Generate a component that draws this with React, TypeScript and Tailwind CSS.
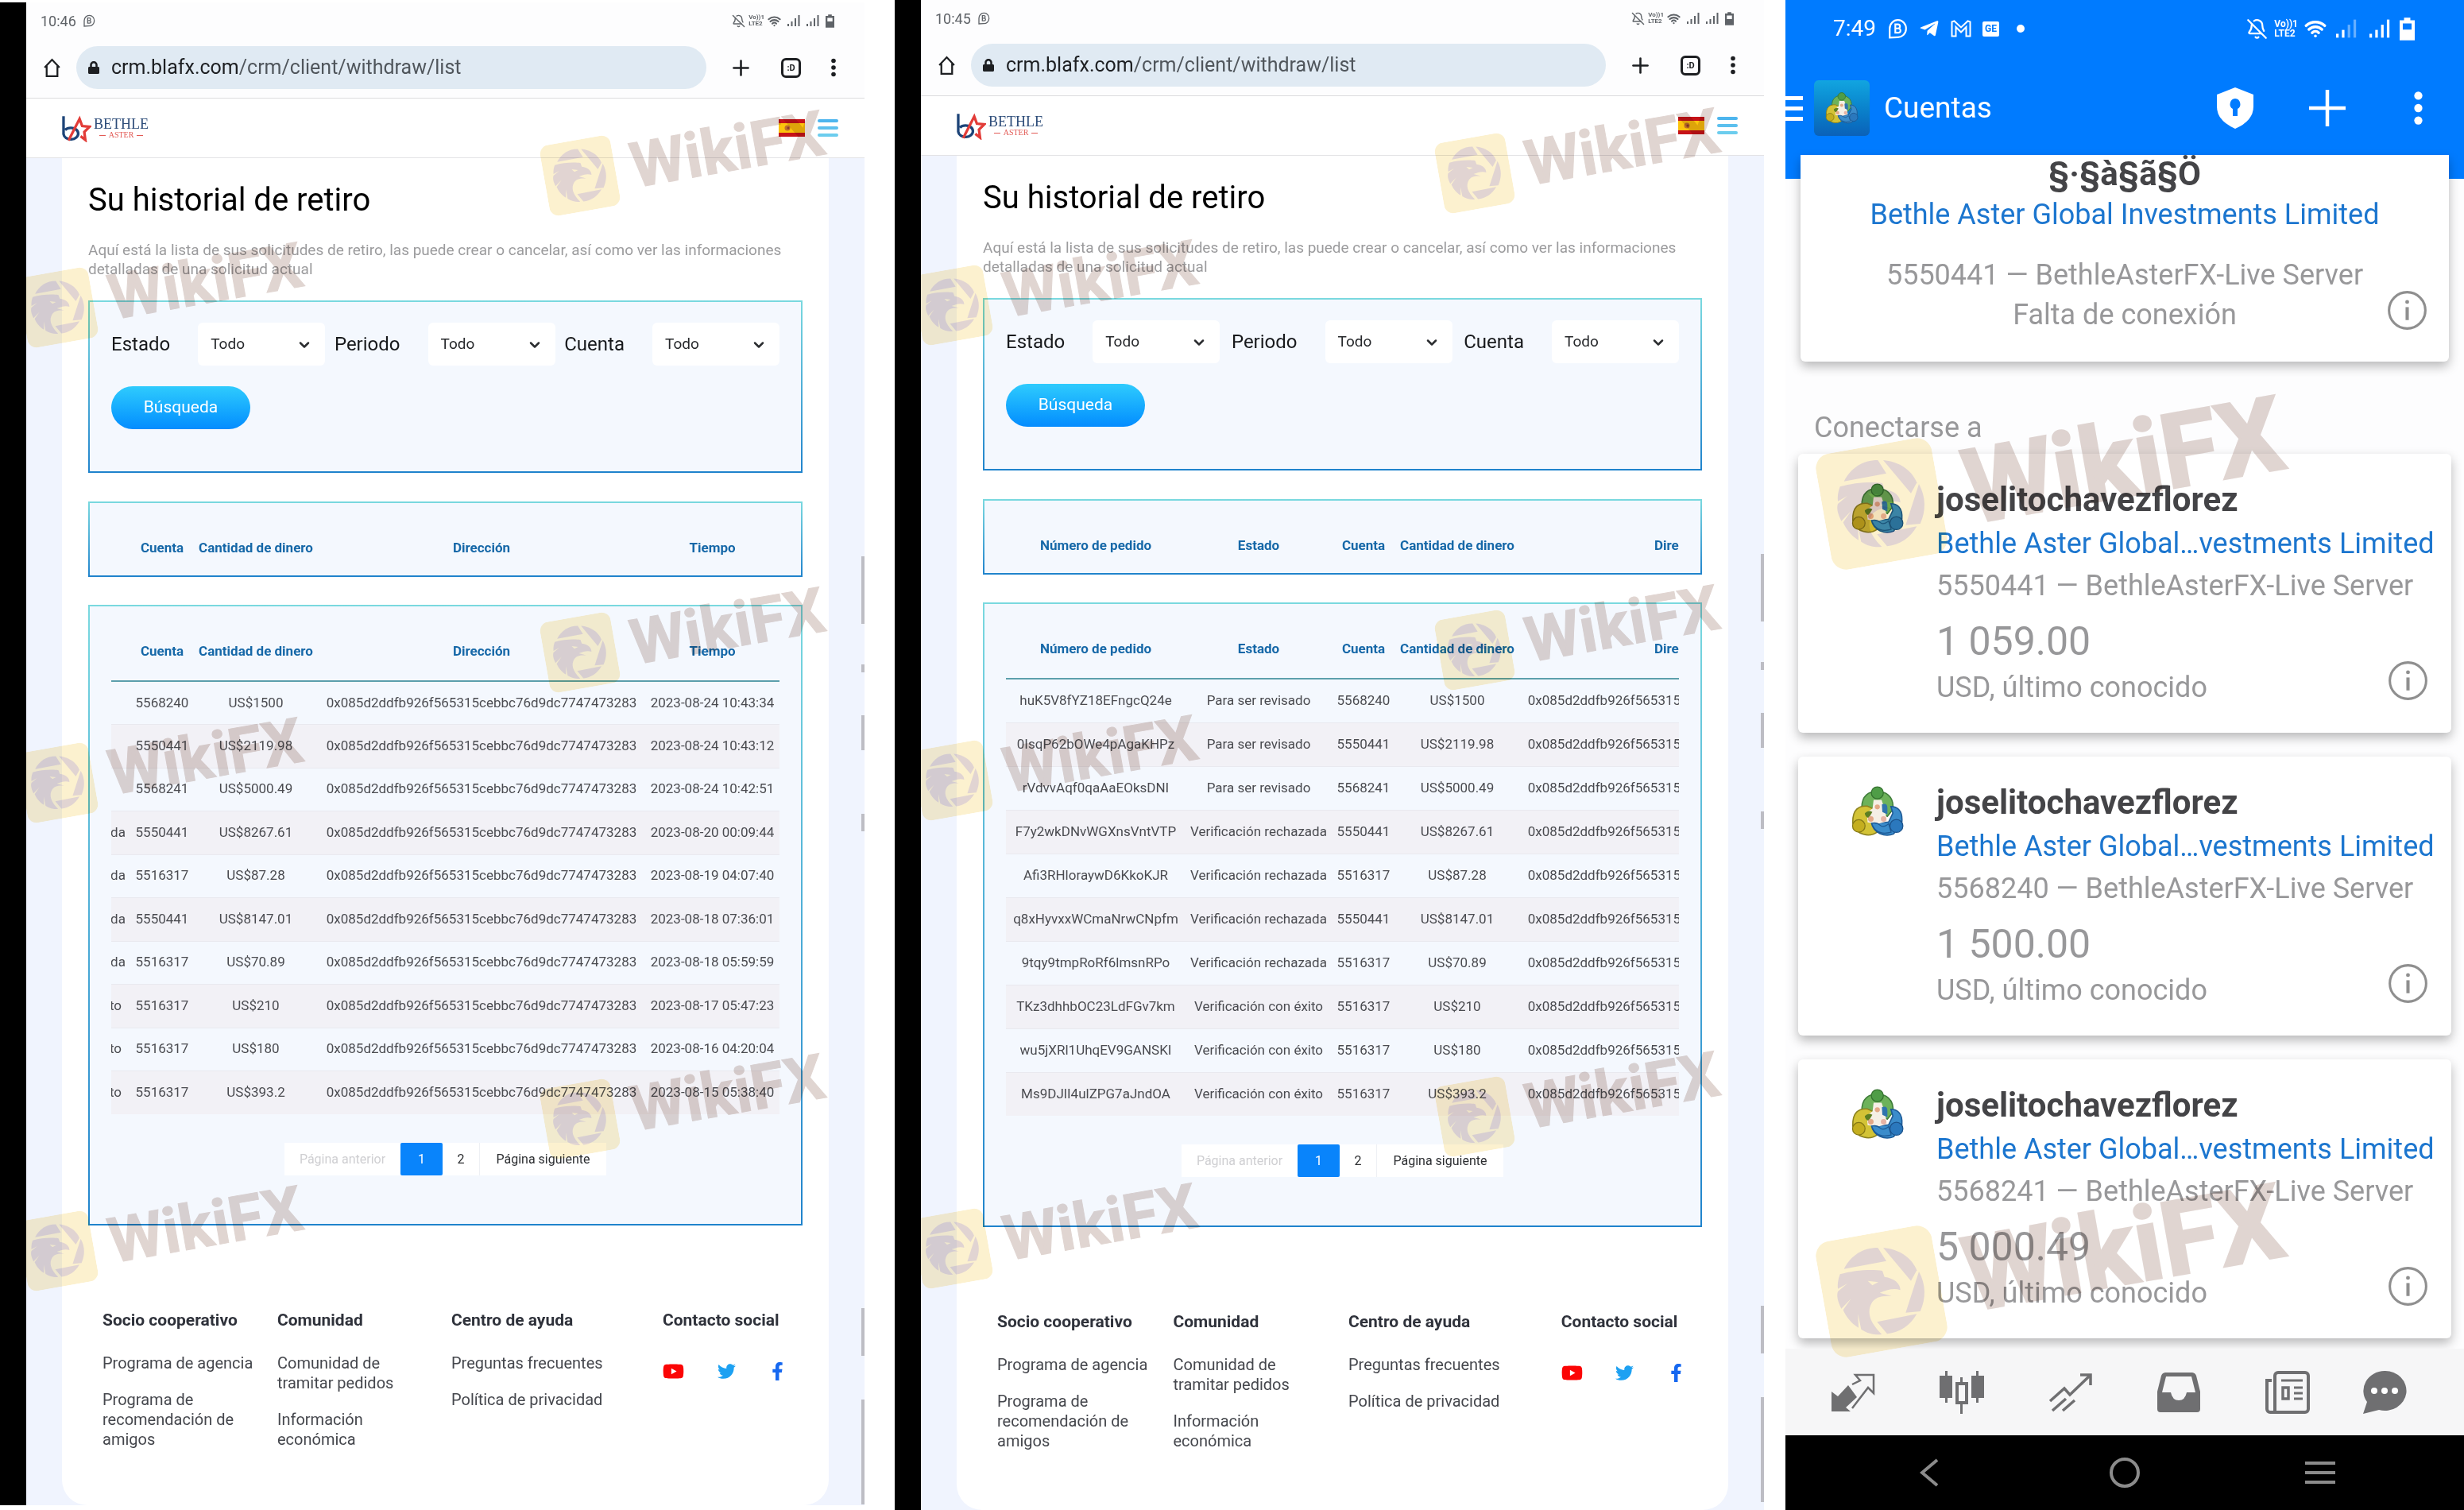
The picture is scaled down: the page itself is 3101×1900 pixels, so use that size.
import React, { ReactNode } from "react";
import { BellOff, ChevronDown, Plus, Wifi } from "lucide-react";
import { FaFacebookF, FaLock, FaTelegramPlane, FaTwitter, FaYoutube } from "react-icons/fa";

const ADDRESS = "0x085d2ddfb926f565315cebbc76d9dc7747473283";

const HEADERS = ["Número de pedido", "Estado", "Cuenta", "Cantidad de dinero", "Dirección", "Tiempo"];

const ROWS = [
  ["huK5V8fYZ18EFngcQ24e", "Para ser revisado", "5568240", "US$1500", "2023-08-24 10:43:34"],
  ["0IsqP62bOWe4pAgaKHPz", "Para ser revisado", "5550441", "US$2119.98", "2023-08-24 10:43:12"],
  ["rVdvvAqf0qaAaEOksDNI", "Para ser revisado", "5568241", "US$5000.49", "2023-08-24 10:42:51"],
  ["F7y2wkDNvWGXnsVntVTP", "Verificación rechazada", "5550441", "US$8267.61", "2023-08-20 00:09:44"],
  ["Afi3RHloraywD6KkoKJR", "Verificación rechazada", "5516317", "US$87.28", "2023-08-19 04:07:40"],
  ["q8xHyvxxWCmaNrwCNpfm", "Verificación rechazada", "5550441", "US$8147.01", "2023-08-18 07:36:01"],
  ["9tqy9tmpRoRf6lmsnRPo", "Verificación rechazada", "5516317", "US$70.89", "2023-08-18 05:59:59"],
  ["TKz3dhhbOC23LdFGv7km", "Verificación con éxito", "5516317", "US$210", "2023-08-17 05:47:23"],
  ["wu5jXRl1UhqEV9GANSKI", "Verificación con éxito", "5516317", "US$180", "2023-08-16 04:20:04"],
  ["Ms9DJlI4ulZPG7aJndOA", "Verificación con éxito", "5516317", "US$393.2", "2023-08-15 05:38:40"],
];

const FOOTER = [
  { title: "Socio cooperativo", links: ["Programa de agencia", "Programa de recomendación de amigos"] },
  { title: "Comunidad", links: ["Comunidad de tramitar pedidos", "Información económica"] },
  { title: "Centro de ayuda", links: ["Preguntas frecuentes", "Política de privacidad"] },
];

const ACCOUNTS = [
  { id: "5550441", balance: "1 059.00" },
  { id: "5568240", balance: "1 500.00" },
  { id: "5568241", balance: "5 000.49" },
];

function BusinessIcon({ className }: { className: string }) {
  return (
    <svg viewBox="0 0 24 24" className={className} fill="none" stroke="currentColor" strokeWidth="2">
      <path d="M3 22.500V12a9.500 10 0 1 1 9 10Z" />
      <path d="M9.500 7h3a2.200 2.200 0 0 1 0 4.800h-3Zm0 4.800h3.500a2.400 2.400 0 0 1 0 5H9.500Z" />
    </svg>
  );
}

function Signal({ className, dim = false }: { className: string; dim?: boolean }) {
  return (
    <svg viewBox="0 0 16 14" className={className} fill="currentColor">
      <rect x="0" y="11" width="2" height="3" />
      <rect x="4.500" y="8" width="2" height="6" />
      <rect x="9" y="4" width="2" height="10" opacity={dim ? 0.4 : 1} />
      <rect x="13.500" y="0" width="2" height="14" opacity={dim ? 0.4 : 1} />
    </svg>
  );
}

function Battery({ className }: { className: string }) {
  return (
    <svg viewBox="0 0 12 18" className={className}>
      <path d="M3.500 0h5v2H12v16H0V2h3.500Z M2.500 4.500v5h7v-5Z" fill="currentColor" fillRule="evenodd" />
    </svg>
  );
}

function Dots({ className }: { className: string }) {
  return (
    <svg viewBox="0 0 6 24" className={className} fill="currentColor">
      <circle cx="3" cy="3.500" r="2.800" />
      <circle cx="3" cy="12" r="2.800" />
      <circle cx="3" cy="20.500" r="2.800" />
    </svg>
  );
}

function Watermark({ className, large = false }: { className: string; large?: boolean }) {
  return (
    <div
      aria-hidden="true"
      className={`pointer-events-none absolute z-10 flex -rotate-10 items-center mix-blend-multiply ${
        large ? "origin-[74px_74px] gap-8" : "origin-[45px_45px] gap-5"
      } ${className}`}
    >
      <svg viewBox="0 0 100 100" className={large ? "size-[148px]" : "size-[90px]"}>
        <rect width="100" height="100" rx="13" fill="#fcf1cf" />
        <g transform="rotate(10 50 50) translate(50 50) scale(.2252) translate(-297 -285)" fill="#e1d4d2">
          <path d="M155 200C180 150 225 120 283 120L315 170Z" />
          <path d="M303 120C360 125 410 155 430 205L408 245Z" />
          <path d="M438 210C465 260 465 310 443 360L388 365Z" />
          <path d="M430 370C405 415 365 440 318 445L280 400Z" />
          <path d="M140 220C190 205 260 200 300 207L308 230C345 235 368 255 368 280C345 272 320 278 290 290L335 302C310 302 280 300 262 325C240 360 250 400 298 447C275 450 245 445 220 428L208 370L210 422C180 405 160 375 152 355L182 312L145 350C130 320 127 300 132 285L168 255L132 275C130 250 135 235 140 220Z" />
          <path d="M245 245L285 250L262 262Z" fill="#fcf1cf" />
        </g>
      </svg>
      <span
        className={`font-bold whitespace-nowrap text-[#e0d5d1] ${
          large ? "text-[130px] leading-[148px] [-webkit-text-stroke:3px_#e0d5d1]" : "text-[79px] leading-[90px] [-webkit-text-stroke:1px_#e0d5d1]"
        }`}
      >
        WikiFX
      </span>
    </div>
  );
}

function BrowserBar({ time }: { time: string }) {
  return (
    <header className="border-b border-[#dcdcde] bg-[#fdfdfe]">
      <div className="flex h-[46px] items-center justify-between pr-[38px] pl-[18px] text-[#5f6368]">
        <div className="flex items-center gap-2">
          <span className="text-[18px]">{time}</span>
          <BusinessIcon className="size-4" />
        </div>
        <div className="flex items-center gap-1">
          <BellOff className="size-[17px]" />
          <span className="text-[8px] leading-[8px] font-bold">
            Vo))1
            <br />
            LTE2
          </span>
          <Wifi className="size-[17px]" strokeWidth={3} />
          <Signal className="ml-1 h-[14px] w-4" />
          <Signal className="ml-1 h-[14px] w-4" />
          <Battery className="ml-1 h-[17px] w-[11px]" />
        </div>
      </div>
      <div className="flex h-[74px] items-center pr-[36px] pb-[2px] pl-5 text-[#1d1f22]">
        <button type="button" aria-label="Inicio">
          <svg viewBox="0 0 24 24" className="h-[25px] w-[25px]" fill="none" stroke="currentColor" strokeWidth="2.200">
            <path d="M3 11.500 12 2l9 9.500M5.500 9.500V22h13V9.500" />
          </svg>
        </button>
        <div className="ml-[18px] flex h-[54px] flex-1 items-center gap-[14px] rounded-full bg-[#e0eaf3] pl-[14px]">
          <FaLock className="size-4" />
          <span className="text-[25px]">
            crm.blafx.com<span className="text-[#50565c]">/crm/client/withdraw/list</span>
          </span>
        </div>
        <button type="button" aria-label="Nueva pestaña" className="ml-[28px]">
          <Plus className="size-[31px]" />
        </button>
        <button
          type="button"
          aria-label="Pestañas"
          className="ml-[35px] size-[25px] rounded-md border-[3px] border-current text-[11px] leading-none font-bold"
        >
          :D
        </button>
        <button type="button" aria-label="Más opciones" className="ml-[38px]">
          <Dots className="h-6 w-[6px]" />
        </button>
      </div>
    </header>
  );
}

function SiteHeader() {
  return (
    <div className="flex h-[75px] items-center justify-between border-b border-[#e3e3e6] bg-white pr-[33px] pl-[43px]">
      <a href="#" className="flex items-center gap-[3px]">
        <svg viewBox="45 38 118 104" className="h-[35px] w-[39px]" fill="none" strokeWidth="10">
          <path d="M57 44V112a28 22 0 1 0 28-24q-14 0-22 8" stroke="#1d4478" />
          <path d="M76 136 118 54l10 27 28 3-20 20 4 30-18-14" stroke="#e23c38" />
        </svg>
        <span className="flex flex-col items-center font-['Liberation_Serif',serif]">
          <span className="text-[18px] leading-[18px] text-[#2b4b78]">BETHLE</span>
          <span className="flex items-center gap-1 text-[10px] leading-[10px] text-[#e25a55]">
            <span className="h-px w-2 bg-current" />
            ASTER
            <span className="h-px w-2 bg-current" />
          </span>
        </span>
      </a>
      <div className="flex items-center gap-4">
        <svg viewBox="0 0 33 22" className="h-[22px] w-[33px]">
          <rect width="33" height="22" fill="#c61318" />
          <rect y="5" width="33" height="12" fill="#fcc40c" />
          <circle cx="11" cy="11" r="3.500" fill="#c0702a" />
          <circle cx="12" cy="11" r="1.500" fill="#8c3a2c" />
        </svg>
        <button type="button" aria-label="Menú" className="flex w-[26px] flex-col gap-[5px]">
          <span className="h-1 rounded-sm bg-[#4db5ee]" />
          <span className="h-1 rounded-sm bg-[#5cc0ee]" />
          <span className="h-1 rounded-sm bg-[#6ccdee]" />
        </button>
      </div>
    </div>
  );
}

function Frame({ children, className }: { children: ReactNode; className: string }) {
  return (
    <div className="bg-linear-to-b from-[#7ad9df] to-[#1f83cc] p-[2px]">
      <div className={`bg-[#f4f8fe] px-[27px] ${className}`}>{children}</div>
    </div>
  );
}

function Filter({ id, label }: { id: string; label: string }) {
  return (
    <div className="flex items-center gap-[35px]">
      <label htmlFor={id} className="text-[24px] text-[#17191c]">
        {label}
      </label>
      <div className="relative">
        <select id={id} className="h-[54px] w-[160px] appearance-none rounded-md bg-white pl-4 text-[19px] text-[#26282b]">
          <option>Todo</option>
        </select>
        <ChevronDown className="pointer-events-none absolute top-[18px] right-4 size-5 text-[#2b2d30]" strokeWidth={3} />
      </div>
    </div>
  );
}

function WithdrawTable({ rows, scrolled, rowClass }: { rows: string[][]; scrolled: boolean; rowClass: string }) {
  return (
    <div className={`flex overflow-hidden ${scrolled ? "justify-end" : "justify-start"}`}>
      <table className="w-[1227px] shrink-0 table-fixed border-collapse text-center text-[17px] whitespace-nowrap text-[#4a4b50]">
        <colgroup>
          <col className="w-[226px]" />
          <col className="w-[184px]" />
          <col className="w-[80px]" />
          <col className="w-[156px]" />
          <col className="w-[412px]" />
          <col className="w-[169px]" />
        </colgroup>
        <thead>
          <tr className="h-[74px] border-b-2 border-[#5c9fac] text-[#1668a8]">
            {HEADERS.map((header) => (
              <th key={header} className="font-bold">
                {header}
              </th>
            ))}
          </tr>
        </thead>
        <tbody>
          {rows.map(([order, status, account, amount, time]) => (
            <tr key={order} className={`border-b border-[#e9e9ef] last:border-0 even:bg-[#f2f1f6] ${rowClass}`}>
              <td>{order}</td>
              <td>{status}</td>
              <td>{account}</td>
              <td>{amount}</td>
              <td>{ADDRESS}</td>
              <td>{time}</td>
            </tr>
          ))}
        </tbody>
      </table>
    </div>
  );
}

function Pagination() {
  return (
    <nav className="mt-[36px] flex h-[41px] justify-center text-[16px] text-[#2c2e31]">
      <button type="button" disabled className="w-[146px] bg-white text-[#cfcfd2]">
        Página anterior
      </button>
      <button type="button" className="w-[53px] rounded-xs bg-[#0984fb] text-white">
        1
      </button>
      <button type="button" className="w-[47px] border-r border-[#eef0f4] bg-white">
        2
      </button>
      <button type="button" className="w-[159px] bg-white">
        Página siguiente
      </button>
    </nav>
  );
}

function PageFooter() {
  return (
    <footer className="mt-[107px] grid grid-cols-[220fr_219fr_266fr_176fr] pb-16 pl-[18px] text-[20px] leading-[25px] text-[#45474d]">
      {FOOTER.map((group) => (
        <div key={group.title}>
          <h2 className="mb-[29px] text-[21px] font-bold whitespace-nowrap text-[#2f323b]">{group.title}</h2>
          <ul className="flex flex-col gap-[21px] pr-6">
            {group.links.map((link) => (
              <li key={link}>
                <a href="#">{link}</a>
              </li>
            ))}
          </ul>
        </div>
      ))}
      <div>
        <h2 className="mb-[38px] text-[21px] font-bold whitespace-nowrap text-[#2f323b]">Contacto social</h2>
        <div className="flex w-[156px] items-center justify-between">
          <a href="#" aria-label="YouTube">
            <FaYoutube className="size-[27px] text-[#fb0505]" />
          </a>
          <a href="#" aria-label="Twitter">
            <FaTwitter className="size-[23px] text-[#1da1f2]" />
          </a>
          <a href="#" aria-label="Facebook">
            <FaFacebookF className="size-[23px] text-[#1668f0]" />
          </a>
        </div>
      </div>
    </footer>
  );
}

type WithdrawScreenProps = {
  id: string;
  time: string;
  scrolled: boolean;
  className: string;
  rowClass: string;
};

function WithdrawScreen({ id, time, scrolled, className, rowClass }: WithdrawScreenProps) {
  return (
    <section className={`relative flex min-w-0 flex-col border-black bg-[#fdfdfe] ${className}`}>
      <BrowserBar time={time} />
      <SiteHeader />
      <main className="flex flex-1 flex-col bg-[#f0f4fe] px-[45px]">
        <div className="flex-1 rounded-b-[32px] bg-white px-[33px] pt-[32px]">
          <h1 className="text-[40px] leading-[42px] text-black">Su historial de retiro</h1>
          <p className="mt-[30px] mb-[27px] text-[19px] leading-[24px] text-[#9b9b9d]">
            Aquí está la lista de sus solicitudes de retiro, las puede crear o cancelar, así como ver las informaciones
            detalladas de una solicitud actual
          </p>

          <Frame className="h-[213px] pt-[26px]">
            <div className="flex justify-between">
              <Filter id={`${id}-estado`} label="Estado" />
              <Filter id={`${id}-periodo`} label="Periodo" />
              <Filter id={`${id}-cuenta`} label="Cuenta" />
            </div>
            <button
              type="button"
              className="mt-[26px] h-[54px] w-[175px] rounded-full bg-linear-to-b from-[#2fcbfd] to-[#068cfe] text-[21px] text-white"
            >
              Búsqueda
            </button>
          </Frame>

          <div className="mt-[36px] mb-[35px]">
            <Frame className="h-[91px] overflow-hidden pt-5">
              <WithdrawTable rows={[]} scrolled={scrolled} rowClass={rowClass} />
            </Frame>
          </div>

          <Frame className="pt-5 pb-[61px]">
            <WithdrawTable rows={ROWS} scrolled={scrolled} rowClass={rowClass} />
            <Pagination />
          </Frame>

          <PageFooter />
        </div>
      </main>

      {/* scroll position ticks on the page edge */}
      <div className="absolute top-[697px] right-0 h-[85px] w-1 bg-[#bdbdc4]" />
      <div className="absolute top-[833px] right-0 h-[10px] w-1 bg-[#bdbdc4]" />
      <div className="absolute top-[897px] right-0 h-[44px] w-1 bg-[#bdbdc4]" />
      <div className="absolute top-[1021px] right-0 h-[22px] w-1 bg-[#bdbdc4]" />
      <div className="absolute top-[1643px] right-0 h-[60px] w-1 bg-[#bdbdc4]" />
      <div className="absolute top-[1758px] right-0 h-[132px] w-1 bg-[#bdbdc4]" />

      <Watermark className="top-[173px] left-[652px]" />
      <Watermark className="top-[339px] left-[-5px]" />
      <Watermark className="top-[773px] left-[652px]" />
      <Watermark className="top-[937px] left-[-5px]" />
      <Watermark className="top-[1360px] left-[652px]" />
      <Watermark className="top-[1526px] left-[-5px]" />
    </section>
  );
}

function MetaTraderIcon({ className }: { className: string }) {
  return (
    <svg viewBox="50 52 222 212" className={className}>
      <path d="M98 150C95 90 130 78 160 78S228 95 222 150L200 178 150 150 120 160Z" fill="#6db25a" stroke="#3f7d3a" strokeWidth="5" />
      <path d="M62 205C60 150 85 135 120 137L150 150 160 240C130 262 75 255 62 205Z" fill="#d3c336" stroke="#8c8220" strokeWidth="5" />
      <path d="M258 200C262 150 235 138 214 138L222 165 205 200 160 205 137 205C145 245 190 262 225 248Z" fill="#3b8ccb" stroke="#1d5a96" strokeWidth="5" />
      <path d="M145 112h32l14 44 8 42-38 10-40-6-2-40 22-16Z" fill="#f5efe6" />
      <path d="M178 130q22-8 22 14v26l-20-10Z" fill="#2f74ad" />
      <path d="M110 165q14-14 30-5l-14 24q-16-4-16-19Z" fill="#5c7f22" />
      <path d="M137 205q22-4 34 8t34-6l10 34q-60 16-78-36Z" fill="#3b8ccb" stroke="#1d5a96" strokeWidth="4" />
      <circle cx="160" cy="140" r="10" fill="#e3a887" />
      <circle cx="134" cy="188" r="11" fill="#e3a887" />
      <circle cx="185" cy="188" r="11" fill="#e6b3a5" />
      <circle cx="160" cy="84" r="24" fill="#4f9d47" stroke="#35722f" strokeWidth="4" />
      <circle cx="86" cy="216" r="25" fill="#c4ae1f" stroke="#857815" strokeWidth="4" />
      <circle cx="236" cy="216" r="26" fill="#2b78bd" stroke="#1b528b" strokeWidth="4" />
    </svg>
  );
}

function InfoButton({ className }: { className: string }) {
  return (
    <button type="button" aria-label="Información" className={`text-[#8f8f8f] ${className}`}>
      <svg viewBox="0 0 24 24" className="size-[49px]" fill="none" stroke="currentColor" strokeWidth="1.500">
        <circle cx="12" cy="12" r="11.200" />
        <path d="M12 10v8" strokeWidth="2" />
        <circle cx="12" cy="6.800" r="1.200" fill="currentColor" stroke="none" />
      </svg>
    </button>
  );
}

function TabBar() {
  return (
    <nav className="mt-[13px] grid h-[109px] grid-cols-[137fr_137fr_137fr_137fr_122fr_56fr] items-center justify-items-start bg-[#f6f6f7] pr-[72px] pl-[57px] text-[#6f6f71]">
      <button type="button" aria-label="Cotizaciones">
        <svg viewBox="0 0 56 50" className="h-[50px] w-14">
          <path d="M1 49V24l8 6 13-14 11 15-14 13 6 5Z" fill="currentColor" />
          <path d="M27 15 37 10 31 3H54V26L47 19 27 45" fill="none" stroke="currentColor" strokeWidth="2.500" />
        </svg>
      </button>
      <button type="button" aria-label="Gráfico">
        <svg viewBox="0 0 56 54" className="h-[54px] w-14" fill="currentColor">
          <path d="M7 0h3v6h6v28h-6v6H7v-6H0V6h7ZM46 0h3v6h7v28h-7v6h-3v-6h-6V6h6Z" />
          <path d="M26 8h3v6h7v28h-7v12h-3V42h-6V14h6ZM24 18v20h8V18Z" fillRule="evenodd" />
        </svg>
      </button>
      <button type="button" aria-label="Operaciones">
        <svg viewBox="0 0 56 50" className="h-[50px] w-14" fill="none" stroke="currentColor" strokeWidth="3.500">
          <path d="M2 36 20 20l7 8L52 4M40 3h13v13M5 48 22 33M18 48 33 35" />
        </svg>
      </button>
      <button type="button" aria-label="Historial">
        <svg viewBox="0 0 56 50" className="h-[50px] w-14">
          <path
            d="M11 0h34a6 6 0 0 1 5 4l5 20v22a4 4 0 0 1-4 4H5a4 4 0 0 1-4-4V24L6 4a6 6 0 0 1 5-4Zm1 5L7 25h11q2 10 10 10t10-10h11L44 5Z"
            fill="currentColor"
            fillRule="evenodd"
          />
        </svg>
      </button>
      <button type="button" aria-label="Noticias">
        <svg viewBox="0 0 56 54" className="h-[54px] w-14" fill="none" stroke="currentColor" strokeWidth="4">
          <path d="M12 52V6a4 4 0 0 1 4-4h34a4 4 0 0 1 4 4v42a4 4 0 0 1-4 4H6a4 4 0 0 1-4-4V12h6" />
          <path d="M20 12h27M36 21h11M36 28h11M36 35h11" strokeWidth="3" />
          <path d="M22 21h7v14h-7Z" strokeWidth="3.500" />
        </svg>
      </button>
      <button type="button" aria-label="Mensajes">
        <svg viewBox="0 0 56 54" className="h-[54px] w-14">
          <path d="M28 0a27 25 0 1 1-7 49L1 54l5-15A27 25 0 0 1 28 0Z" fill="currentColor" />
          <g fill="#fff">
            <circle cx="15" cy="25" r="4" />
            <circle cx="28" cy="25" r="4" />
            <circle cx="41" cy="25" r="4" />
          </g>
        </svg>
      </button>
    </nav>
  );
}

function AccountCard({ id, balance }: { id: string; balance: string }) {
  return (
    <article className="flex gap-[39px] rounded-md bg-white pt-[30px] pr-[30px] pb-[29px] pl-[65px] shadow-[0_6px_14px_rgba(0,0,0,0.28)]">
      <MetaTraderIcon className="mt-[5px] h-[68px] w-[70px] shrink-0" />
      <div className="min-w-0 flex-1 whitespace-nowrap">
        <h3 className="text-[42px] leading-[56px] font-bold text-[#444447]">joselitochavezflorez</h3>
        <a href="#" className="block text-[36px] leading-[54px] text-[#1c76cf]">
          Bethle Aster Global…vestments Limited
        </a>
        <p className="text-[36px] leading-[52px] text-[#98989a]">{id} — BethleAsterFX-Live Server</p>
        <div className="mt-[14px] flex items-end justify-between">
          <div className="text-[#98989a]">
            <p className="text-[50px] leading-[60px]">{balance}</p>
            <p className="text-[36px] leading-[56px]">USD, último conocido</p>
          </div>
          <InfoButton className="mb-[12px]" />
        </div>
      </div>
    </article>
  );
}

function AccountsScreen() {
  return (
    <section className="relative flex min-w-0 flex-col bg-[#fdfdfe]">
      <header className="h-[225px] bg-[#007bff] text-white">
        <div className="flex h-[72px] items-center justify-between pr-[62px] pl-[60px]">
          <div className="flex items-center gap-[14px]">
            <span className="text-[28px]">7:49</span>
            <BusinessIcon className="size-[26px]" />
            <FaTelegramPlane className="size-[26px]" />
            <svg viewBox="0 0 26 22" className="h-[22px] w-[26px]" fill="none" stroke="currentColor" strokeWidth="2">
              <path d="M1.500 20.500V2.500l3-1 8.500 8 8.500-8 3 1v18h-5V9L13 15.500 6.500 9v11.500Z" />
            </svg>
            <span className="rounded-xs bg-white px-[3px] text-[12px] leading-[19px] font-bold text-[#007bff]">GE</span>
            <span className="ml-2 size-[10px] rounded-full bg-white" />
          </div>
          <div className="flex items-center gap-2">
            <BellOff className="size-[27px]" />
            <span className="text-[12px] leading-[12px] font-bold">
              Vo))1
              <br />
              LTE2
            </span>
            <Wifi className="size-7" strokeWidth={3} />
            <Signal className="ml-1 h-6 w-[26px]" dim />
            <Signal className="ml-2 h-6 w-[26px]" />
            <Battery className="ml-1 h-[29px] w-[19px]" />
          </div>
        </div>
        <div className="flex h-[128px] items-center pr-[52px]">
          <button type="button" aria-label="Menú" className="flex w-[22px] flex-col gap-[8px]">
            <span className="h-[5px] bg-white" />
            <span className="h-[5px] bg-white" />
            <span className="h-[5px] bg-white" />
          </button>
          <div className="ml-[14px] flex size-[70px] items-center justify-center rounded-md bg-linear-to-b from-[#12a5e0] to-[#0b61b8]">
            <MetaTraderIcon className="h-[42px] w-[44px]" />
          </div>
          <h1 className="ml-[18px] flex-1 text-[37px]">Cuentas</h1>
          <button type="button" aria-label="Seguridad">
            <svg viewBox="0 0 46 52" className="h-[52px] w-[46px]">
              <path d="M23 0 46 9v15q0 18-23 28Q0 42 0 24V9Z" fill="#fff" />
              <path d="M23 14a7 7 0 0 1 3 13v9h-6v-9a7 7 0 0 1 3-13Z" fill="#007bff" />
            </svg>
          </button>
          <button type="button" aria-label="Añadir cuenta" className="ml-[70px]">
            <svg viewBox="0 0 46 46" className="size-[46px]" stroke="#fff" strokeWidth="4.500">
              <path d="M23 0v46M0 23h46" />
            </svg>
          </button>
          <button type="button" aria-label="Más opciones" className="ml-[86px]">
            <Dots className="h-[44px] w-[11px]" />
          </button>
        </div>
      </header>

      <main className="-mt-[30px] flex-1 px-4">
        <div className="relative mx-[3px] rounded-b-md bg-white pb-[34px] text-center whitespace-nowrap shadow-[0_6px_14px_rgba(0,0,0,0.28)]">
          <h2 className="text-[42px] leading-[48px] font-bold text-[#444447]">§·§à§ã§Ö</h2>
          <a href="#" className="block text-[36px] leading-[54px] text-[#1c76cf]">
            Bethle Aster Global Investments Limited
          </a>
          <p className="mt-6 text-[36px] leading-[50px] text-[#98989a]">5550441 — BethleAsterFX-Live Server</p>
          <p className="text-[36px] leading-[50px] text-[#98989a]">Falta de conexión</p>
          <InfoButton className="absolute right-[28px] bottom-[40px]" />
        </div>

        <h2 className="mt-[63px] mb-[13px] px-5 text-[36px] leading-[40px] text-[#98989a]">Conectarse a</h2>
        <div className="flex flex-col gap-[30px]">
          {ACCOUNTS.map((account) => (
            <AccountCard key={account.id} {...account} />
          ))}
        </div>
      </main>

      <TabBar />

      <nav className="grid h-[94px] grid-cols-3 items-center justify-items-center bg-black px-[58px] text-[#8b8b8b]">
        <button type="button" aria-label="Atrás">
          <svg viewBox="0 0 24 36" className="h-[36px] w-6" fill="none" stroke="currentColor" strokeWidth="4">
            <path d="M22 2 3 18l19 16" />
          </svg>
        </button>
        <button type="button" aria-label="Inicio" className="size-[38px] rounded-full border-4 border-current" />
        <button type="button" aria-label="Recientes" className="flex w-[38px] flex-col gap-[8px]">
          <span className="h-1 bg-current" />
          <span className="h-1 bg-current" />
          <span className="h-1 bg-current" />
        </button>
      </nav>

      <Watermark large className="top-[560px] left-[47px]" />
      <Watermark large className="top-[1551px] left-[47px]" />
    </section>
  );
}

export default function App() {
  return (
    <div className="grid min-h-screen grid-cols-[minmax(0,1126fr)_minmax(0,1094fr)_minmax(0,881fr)] overflow-hidden bg-white font-[Roboto,sans-serif]">
      <div className="pt-[3px] pr-[38px] pb-[6px]">
        <WithdrawScreen id="a" time="10:46" scrolled className="h-full border-l-[33px]" rowClass="odd:h-[54px] even:h-[55px]" />
      </div>
      <WithdrawScreen id="b" time="10:45" scrolled={false} className="border-l-[33px]" rowClass="h-[55px]" />
      <div className="grid grid-cols-1 pl-[27px]">
        <AccountsScreen />
      </div>
    </div>
  );
}
